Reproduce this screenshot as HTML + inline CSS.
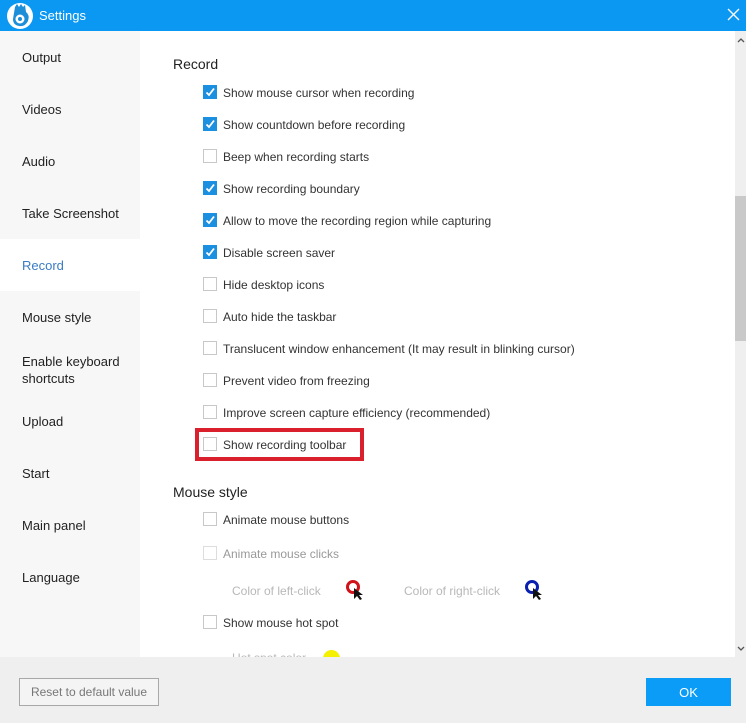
<!DOCTYPE html>
<html><head><meta charset="utf-8"><style>
*{margin:0;padding:0;box-sizing:border-box}
body{width:746px;height:723px;position:relative;overflow:hidden;background:#fff;font-family:"Liberation Sans",sans-serif;font-size:12px;color:#333}
.a{position:absolute;white-space:nowrap}
.title{left:0;top:0;width:746px;height:31px;background:#0b98f2}
.side{left:0;top:31px;width:140px;height:626px;background:#f7f7f7}
.nav{left:22px;font-size:13px;color:#222}
.cb{position:absolute;width:14px;height:14px;border:1px solid #c8c8c8;background:#fff}
.cb.on{background:#1b8fe0;border-color:#1b8fe0}
.lbl{position:absolute;font-size:12px;color:#333}
.dim{color:#b8b8b8}
</style></head><body>
<div class="a title"></div>
<svg class="a" style="left:6px;top:2px" width="28" height="28" viewBox="0 0 28 28">
<circle cx="14" cy="14" r="13" fill="#fff"/>
<path d="M9 5 L11 2 L13 5 L15 2 L17 5 L19 3 L20 10 Q24 13 22 19 Q19 25 13 24 Q7 23 7 17 Z" fill="#1d8fd8"/>
<circle cx="14" cy="17" r="4.5" fill="#fff"/><circle cx="14" cy="17" r="2" fill="#1d8fd8"/>
</svg>
<div class="a" style="left:39px;top:8px;color:#fff;font-size:13px">Settings</div>
<svg class="a" style="left:727px;top:8px" width="13" height="13"><path d="M1 1L12 12M12 1L1 12" stroke="#fff" stroke-width="1.3"/></svg>

<div class="a side"></div>
<div class="a" style="left:0;top:239px;width:140px;height:52px;background:#fff"></div>
<div class="a nav" style="top:50px">Output</div>
<div class="a nav" style="top:102px">Videos</div>
<div class="a nav" style="top:154px">Audio</div>
<div class="a nav" style="top:206px">Take Screenshot</div>
<div class="a nav" style="top:258px;color:#3a7cc4">Record</div>
<div class="a nav" style="top:310px">Mouse style</div>
<div class="a nav" style="top:353px;line-height:17px">Enable keyboard<br>shortcuts</div>
<div class="a nav" style="top:414px">Upload</div>
<div class="a nav" style="top:466px">Start</div>
<div class="a nav" style="top:518px">Main panel</div>
<div class="a nav" style="top:570px">Language</div>

<div class="a" style="left:173px;top:56px;font-size:14px;color:#222">Record</div>
<div id="rows"></div>
<div class="a" style="left:195px;top:428px;width:169px;height:33px;border:4px solid #d9202c"></div>
<div class="a" style="left:173px;top:484px;font-size:14px;color:#222">Mouse style</div>
<div class="cb" style="left:203px;top:512px"></div><div class="lbl" style="left:223px;top:513px">Animate mouse buttons</div>
<div class="cb" style="left:203px;top:546px;border-color:#ddd"></div><div class="lbl dim" style="left:223px;top:547px;color:#999">Animate mouse clicks</div>
<div class="lbl dim" style="left:232px;top:584px">Color of left-click</div>
<svg class="a" style="left:345px;top:579px" width="22" height="22"><circle cx="8" cy="8" r="5.5" fill="none" stroke="#d0121a" stroke-width="3"/><path d="M9 9L9 20L12 17L15 21L17 20L14 16L18 16Z" fill="#111"/></svg>
<div class="lbl dim" style="left:404px;top:584px">Color of right-click</div>
<svg class="a" style="left:524px;top:579px" width="22" height="22"><circle cx="8" cy="8" r="5.5" fill="none" stroke="#0a1fb0" stroke-width="3"/><path d="M9 9L9 20L12 17L15 21L17 20L14 16L18 16Z" fill="#111"/></svg>
<div class="cb" style="left:203px;top:615px"></div><div class="lbl" style="left:223px;top:616px">Show mouse hot spot</div>
<div class="lbl dim" style="left:232px;top:651px">Hot spot color</div>
<div class="a" style="left:323px;top:650px;width:17px;height:17px;border-radius:50%;background:#f5f000"></div>

<div class="a" style="left:735px;top:31px;width:11px;height:626px;background:#efefef"></div>
<div class="a" style="left:735px;top:196px;width:11px;height:145px;background:#c9c9c9"></div>
<svg class="a" style="left:737px;top:37px" width="8" height="6"><path d="M1 5L4 2L7 5" stroke="#555" fill="none" stroke-width="1.3"/></svg>
<svg class="a" style="left:737px;top:646px" width="8" height="6"><path d="M1 1L4 4L7 1" stroke="#555" fill="none" stroke-width="1.3"/></svg>

<div class="a" style="left:0;top:657px;width:746px;height:66px;background:#efefef"></div>
<div class="a" style="left:19px;top:678px;width:140px;height:28px;border:1px solid #a8a8a8;background:#f4f4f4;color:#777;text-align:center;line-height:27px">Reset to default value</div>
<div class="a" style="left:646px;top:678px;width:85px;height:28px;background:#0a9cf7;color:#fff;text-align:center;line-height:29px;font-size:13px">OK</div>
<script>
var r=[[1,"Show mouse cursor when recording"],[1,"Show countdown before recording"],[0,"Beep when recording starts"],[1,"Show recording boundary"],[1,"Allow to move the recording region while capturing"],[1,"Disable screen saver"],[0,"Hide desktop icons"],[0,"Auto hide the taskbar"],[0,"Translucent window enhancement (It may result in blinking cursor)"],[0,"Prevent video from freezing"],[0,"Improve screen capture efficiency (recommended)"],[0,"Show recording toolbar"]];
var h="";r.forEach(function(x,i){var y=85+i*32;h+='<div class="cb'+(x[0]?' on':'')+'" style="left:203px;top:'+y+'px">'+(x[0]?'<svg width="12" height="12" style="position:absolute;left:0;top:0"><path d="M2.5 6.5L5 9L10 2.5" stroke="#fff" stroke-width="1.8" fill="none"/></svg>':'')+'</div><div class="lbl" style="left:223px;top:'+(y+1)+'px">'+x[1]+'</div>';});
document.getElementById("rows").innerHTML=h;
</script>
</body></html>
